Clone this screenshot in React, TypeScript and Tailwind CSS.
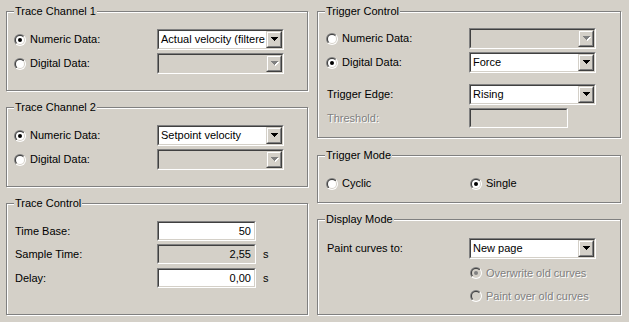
import type { ReactNode } from "react";

const face = "#d4d0c8";

function GroupBox({
  title,
  className,
  children,
}: {
  title: string;
  className: string;
  children: ReactNode;
}) {
  return (
    <div
      className={`relative border border-[#808080] shadow-[inset_1px_1px_0_#ffffff,1px_1px_0_#ffffff] ${className}`}
    >
      <span className="absolute left-[7px] top-[-7px] bg-[#d4d0c8] px-[1px] leading-[13px]">
        {title}
      </span>
      {children}
    </div>
  );
}

function Sunken({
  className,
  disabled,
  children,
}: {
  className: string;
  disabled?: boolean;
  children?: ReactNode;
}) {
  return (
    <div
      className={`shrink-0 border border-t-[#808080] border-l-[#808080] border-b-white border-r-white ${className}`}
    >
      <div
        className={`flex h-full border border-t-[#404040] border-l-[#404040] border-b-[#d4d0c8] border-r-[#d4d0c8] ${
          disabled ? "bg-[#d4d0c8]" : "bg-white"
        }`}
      >
        {children}
      </div>
    </div>
  );
}

function Arrow({ color }: { color: string }) {
  return (
    <path d="M0 0h7v1H0zM1 1h5v1H1zM2 2h3v1H2zM3 3h1v1H3z" fill={color} />
  );
}

function DropButton({ disabled }: { disabled?: boolean }) {
  return (
    <div className="h-full w-[16px] shrink-0 border border-t-[#d4d0c8] border-l-[#d4d0c8] border-b-[#404040] border-r-[#404040]">
      <div className="flex h-full items-center justify-center border border-t-white border-l-white border-b-[#808080] border-r-[#808080] bg-[#d4d0c8]">
        <svg width="8" height="5" viewBox="0 0 8 5" shapeRendering="crispEdges" className="ml-[1px]">
          {disabled ? (
            <>
              <g transform="translate(1 1)">
                <Arrow color="#ffffff" />
              </g>
              <Arrow color="#808080" />
            </>
          ) : (
            <Arrow color="#000000" />
          )}
        </svg>
      </div>
    </div>
  );
}

function Combo({ value, disabled }: { value?: string; disabled?: boolean }) {
  return (
    <Sunken className="h-[21px] w-[127px]" disabled={disabled}>
      <span className="min-w-0 flex-1 overflow-hidden whitespace-nowrap pl-[2px] leading-[17px]">
        {value}
      </span>
      <DropButton disabled={disabled} />
    </Sunken>
  );
}

function Edit({ value, disabled }: { value?: string; disabled?: boolean }) {
  return (
    <Sunken className="h-[20px] w-[99px]" disabled={disabled}>
      <span className="flex-1 pr-[3px] text-right leading-[16px]">{value}</span>
    </Sunken>
  );
}

function Radio({ checked, disabled }: { checked?: boolean; disabled?: boolean }) {
  return (
    <svg width="12" height="12" viewBox="0 0 12 12" className="shrink-0">
      <defs>
        <linearGradient id="radioOuter" x1="0" y1="0" x2="1" y2="1">
          <stop offset="0.5" stopColor="#808080" />
          <stop offset="0.5" stopColor="#ffffff" />
        </linearGradient>
        <linearGradient id="radioInner" x1="0" y1="0" x2="1" y2="1">
          <stop offset="0.5" stopColor="#404040" />
          <stop offset="0.5" stopColor={face} />
        </linearGradient>
      </defs>
      <circle cx="6" cy="6" r="6" fill="url(#radioOuter)" />
      <circle cx="6" cy="6" r="5" fill="url(#radioInner)" />
      <circle cx="6" cy="6" r="4" fill={disabled ? face : "#ffffff"} />
      {checked ? <circle cx="6" cy="6" r="2" fill={disabled ? "#808080" : "#000000"} /> : null}
    </svg>
  );
}

function RadioLabel({
  text,
  checked,
  disabled,
  className = "",
}: {
  text: string;
  checked?: boolean;
  disabled?: boolean;
  className?: string;
}) {
  return (
    <div className={`flex items-center gap-[4px] ${className}`}>
      <Radio checked={checked} disabled={disabled} />
      <span
        className={
          disabled ? "text-[#808080] [text-shadow:1px_1px_0_#ffffff]" : ""
        }
      >
        {text}
      </span>
    </div>
  );
}

function ChannelBox({ title, value }: { title: string; value: string }) {
  return (
    <GroupBox title={title} className="h-[80px]">
      <div className="flex flex-col gap-[3px] pl-[7px] pt-[17px]">
        <div className="flex h-[21px] items-center">
          <RadioLabel text="Numeric Data:" checked className="w-[143px]" />
          <Combo value={value} />
        </div>
        <div className="flex h-[21px] items-center">
          <RadioLabel text="Digital Data:" className="w-[143px]" />
          <Combo disabled />
        </div>
      </div>
    </GroupBox>
  );
}

export default function App() {
  return (
    <div className="h-[322px] w-[629px] overflow-hidden bg-[#d4d0c8] font-['Liberation_Sans',Arial,sans-serif] text-[11px] text-black">
      <div className="flex gap-[9px] pl-[6px] pt-[11px]">
        <div className="flex w-[302px] flex-col gap-[16px]">
          <ChannelBox title="Trace Channel 1" value="Actual velocity (filtere" />
          <ChannelBox title="Trace Channel 2" value="Setpoint velocity" />

          <GroupBox title="Trace Control" className="h-[112px]">
            <div className="flex flex-col gap-[3px] pl-[8px] pt-[17px]">
              <div className="flex h-[20px] items-center">
                <span className="w-[142px]">Time Base:</span>
                <Edit value="50" />
              </div>
              <div className="flex h-[20px] items-center">
                <span className="w-[142px]">Sample Time:</span>
                <Edit value="2,55" disabled />
                <span className="ml-[7px]">s</span>
              </div>
              <div className="mt-[1px] flex h-[20px] items-center">
                <span className="w-[142px]">Delay:</span>
                <Edit value="0,00" />
                <span className="ml-[7px]">s</span>
              </div>
            </div>
          </GroupBox>
        </div>

        <div className="flex w-[304px] flex-col">
          <GroupBox title="Trigger Control" className="h-[127px]">
            <div className="flex flex-col pl-[8px] pt-[16px]">
              <div className="flex h-[21px] items-center">
                <RadioLabel text="Numeric Data:" className="w-[143px]" />
                <Combo disabled />
              </div>
              <div className="mt-[3px] flex h-[21px] items-center">
                <RadioLabel text="Digital Data:" checked className="w-[143px]" />
                <Combo value="Force" />
              </div>
              <div className="mt-[11px] flex h-[21px] items-center pl-[1px]">
                <span className="w-[142px]">Trigger Edge:</span>
                <Combo value="Rising" />
              </div>
              <div className="mt-[3px] flex h-[20px] items-center pl-[1px]">
                <span className="w-[142px] text-[#808080] [text-shadow:1px_1px_0_#ffffff]">
                  Threshold:
                </span>
                <Edit disabled />
              </div>
            </div>
          </GroupBox>

          <GroupBox title="Trigger Mode" className="mt-[17px] h-[48px]">
            <div className="mt-[17px] flex h-[21px] items-center pl-[8px]">
              <RadioLabel text="Cyclic" className="w-[144px]" />
              <RadioLabel text="Single" checked />
            </div>
          </GroupBox>

          <GroupBox title="Display Mode" className="mt-[16px] h-[96px]">
            <div className="flex flex-col pl-[9px] pt-[18px]">
              <div className="flex h-[21px] items-center">
                <span className="w-[142px]">Paint curves to:</span>
                <Combo value="New page" />
              </div>
              <div className="mt-[4px] flex h-[20px] items-center pl-[143px]">
                <RadioLabel text="Overwrite old curves" checked disabled />
              </div>
              <div className="mt-[3px] flex h-[20px] items-center pl-[143px]">
                <RadioLabel text="Paint over old curves" disabled />
              </div>
            </div>
          </GroupBox>
        </div>
      </div>
    </div>
  );
}
